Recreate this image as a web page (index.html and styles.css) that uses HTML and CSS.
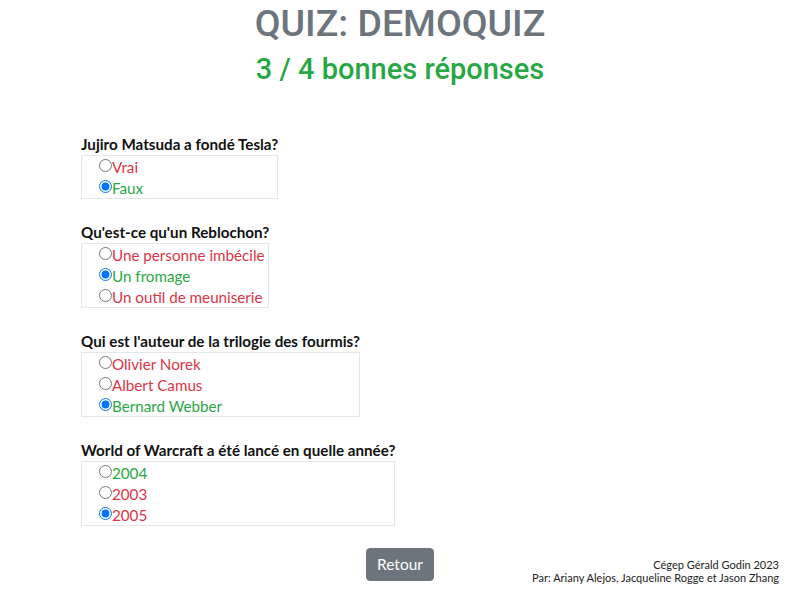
FILE: index.html
```html
<!DOCTYPE html>
<html lang="fr">
<head>
<meta charset="utf-8">
<title>Quiz: DemoQuiz</title>
<link rel="stylesheet" href="styles.css">
</head>
<body>
<header class="head">
  <h1 class="title">QUIZ: DEMOQUIZ</h1>
  <h2 class="score">3 / 4 bonnes réponses</h2>
</header>
<main class="quiz">
  <div class="question">
    <div class="q-label">Jujiro Matsuda a fondé Tesla?</div>
    <div class="options">
      <label class="opt wrong"><input type="radio" name="q1">Vrai</label>
      <label class="opt right"><input type="radio" name="q1" checked>Faux</label>
    </div>
  </div>
  <div class="question">
    <div class="q-label">Qu'est-ce qu'un Reblochon?</div>
    <div class="options">
      <label class="opt wrong"><input type="radio" name="q2">Une personne imbécile</label>
      <label class="opt right"><input type="radio" name="q2" checked>Un fromage</label>
      <label class="opt wrong"><input type="radio" name="q2">Un outil de meuniserie</label>
    </div>
  </div>
  <div class="question">
    <div class="q-label">Qui est l'auteur de la trilogie des fourmis?</div>
    <div class="options">
      <label class="opt wrong"><input type="radio" name="q3">Olivier Norek</label>
      <label class="opt wrong"><input type="radio" name="q3">Albert Camus</label>
      <label class="opt right"><input type="radio" name="q3" checked>Bernard Webber</label>
    </div>
  </div>
  <div class="question">
    <div class="q-label">World of Warcraft a été lancé en quelle année?</div>
    <div class="options">
      <label class="opt right"><input type="radio" name="q4">2004</label>
      <label class="opt wrong"><input type="radio" name="q4">2003</label>
      <label class="opt wrong"><input type="radio" name="q4" checked>2005</label>
    </div>
  </div>
</main>
<div class="bottom">
  <div class="spacer"></div>
  <button class="btn-back" type="button">Retour</button>
  <footer class="credits">
    <div>Cégep Gérald Godin 2023</div>
    <div>Par: Ariany Alejos, Jacqueline Rogge et Jason Zhang</div>
  </footer>
</div>
</body>
</html>
```

FILE: styles.css
```css
html, body {
  margin: 0;
  padding: 0;
  background: #ffffff;
}
body {
  font-family: "Lato", "Open Sans", sans-serif;
  color: #212529;
  font-size: 15px;
}
.head {
  text-align: center;
  font-family: "Roboto", "Open Sans", sans-serif;
}
.title {
  margin: 0;
  padding-top: 1px;
  font-size: 37.5px;
  line-height: 45px;
  font-weight: 500;
  color: #6c757d;
}
.score {
  margin: 5px 0 0;
  font-size: 29px;
  line-height: 36px;
  font-weight: 500;
  color: #28a745;
}
.quiz {
  padding: 46px 0 0 81px;
}
.question {
  width: fit-content;
  margin-bottom: 22px;
}
.q-label {
  font-weight: 700;
  font-size: 15.2px;
  line-height: 22px;
  color: #111;
}
.options {
  border: 1px solid #e6e6e6;
  padding: 0 0 0 17px;
}
.opt {
  display: flex;
  align-items: center;
  height: 21px;
  font-size: 15.2px;
}
.opt input {
  margin: 0 0 2px 0;
  width: 13px;
  height: 13px;
}
.wrong { color: #dc3545; }
.right { color: #28a745; }
.bottom {
  display: grid;
  grid-template-columns: 1fr auto 1fr;
  align-items: start;
}
.btn-back {
  font-family: "Lato", sans-serif;
  font-size: 15.5px;
  color: #fff;
  background: #6c757d;
  border: 1px solid #6c757d;
  border-radius: 4px;
  padding: 5px 10px;
  line-height: 21px;
}
.credits {
  justify-self: end;
  margin: 10px 21px 0 0;
  text-align: right;
  font-size: 11px;
  line-height: 13px;
  color: #222;
}
```
